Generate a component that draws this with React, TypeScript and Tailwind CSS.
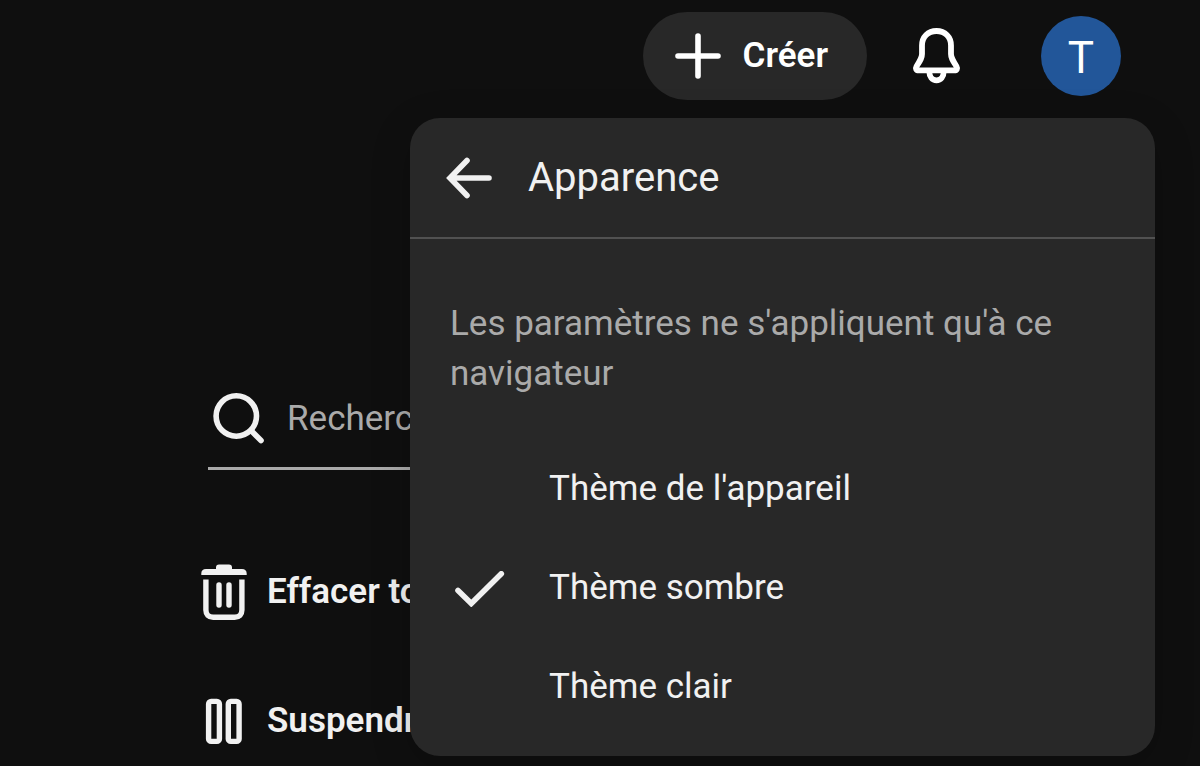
import { useState } from "react";

function PlusIcon() {
  return (
    <svg width="46" height="46" viewBox="0 0 46 46" fill="none" stroke="currentColor" strokeWidth="5.6" strokeLinecap="round" aria-hidden="true">
      <path d="M23 3v40M3 23h40" />
    </svg>
  );
}

function BellIcon() {
  return (
    <svg width="49" height="56" viewBox="0 0 49 56" fill="none" stroke="currentColor" strokeWidth="5.8" strokeLinejoin="round" aria-hidden="true">
      <path d="M24.5 3C16 3 10 9 10 17.5V26c0 3.600-1.200 5.600-5.400 12.200-1.300 2.400-.6 4.200 2.200 4.200h35.400c2.800 0 3.500-1.800 2.200-4.200C40.200 31.600 39 29.600 39 26v-8.500C39 9 33 3 24.500 3Z" />
      <path d="M17.300 43.500c0 5.300 3 8.800 7.200 8.800s7.200-3.500 7.200-8.800" />
    </svg>
  );
}

function ArrowLeftIcon() {
  return (
    <svg width="46" height="42" viewBox="0 0 46 42" fill="none" stroke="currentColor" strokeWidth="5.6" strokeLinecap="round" aria-hidden="true">
      <path d="M21 3.500 4 21l17 17.500M4 21h39" />
    </svg>
  );
}

function SearchIcon() {
  return (
    <svg className="shrink-0" width="52" height="52" viewBox="0 0 52 52" fill="none" stroke="currentColor" strokeWidth="5.600" strokeLinecap="round" aria-hidden="true">
      <circle cx="23.300" cy="24" r="20.200" />
      <path d="m38 38.500 10 10" />
    </svg>
  );
}

function TrashIcon() {
  return (
    <svg width="46" height="56" viewBox="0 0 46 56" fill="none" aria-hidden="true">
      <path d="M.3 11V9.500C.3 6.500 2 5 5 5h10V3.500C15 1.500 16 .5 18 .5h10c2 0 3 1 3 3V5h10c3 0 4.700 1.500 4.700 4.500V11Z" fill="currentColor" />
      <path d="M4.900 15.500V46c0 4.500 2.600 7.200 7.200 7.200h21.600c4.600 0 7.200-2.700 7.200-7.200V15.500" stroke="currentColor" strokeWidth="5.400" />
      <path d="M18 21v20M28 21v20" stroke="currentColor" strokeWidth="5.400" strokeLinecap="round" />
    </svg>
  );
}

function PauseIcon() {
  return (
    <svg width="46" height="56" viewBox="0 0 46 56" fill="none" stroke="currentColor" strokeWidth="5.400" aria-hidden="true">
      <rect x="7.600" y="8.400" width="10.800" height="40" rx="2.500" />
      <rect x="27.300" y="8.400" width="10.800" height="40" rx="2.500" />
    </svg>
  );
}

function CheckIcon() {
  return (
    <svg width="50" height="36" viewBox="0 0 50 36" fill="none" stroke="currentColor" strokeWidth="5.600" strokeLinecap="round" aria-hidden="true">
      <path d="M3 19.500 16.300 32.500 46.300 2.800" />
    </svg>
  );
}

const themes = [
  { id: "device", label: "Thème de l'appareil" },
  { id: "dark", label: "Thème sombre" },
  { id: "light", label: "Thème clair" },
];

function AppearanceMenu() {
  const [theme, setTheme] = useState("dark");

  return (
    <section className="absolute top-[118px] right-[45px] w-[745px] pb-5 rounded-[30px] bg-[#282828] shadow-[0_10px_40px_rgba(0,0,0,0.2)]">
      <header className="flex items-center gap-9 h-[121px] px-9 border-b-2 border-[#515151]">
        <button type="button" aria-label="Retour">
          <ArrowLeftIcon />
        </button>
        <h2 className="text-[40px] leading-[50px]">Apparence</h2>
      </header>
      <p className="px-10 pt-[60px] text-[35px] leading-[50px] text-[#aaaaaa]">
        Les paramètres ne s'appliquent qu'à ce navigateur
      </p>
      <div role="menu" className="mt-10">
        {themes.map((item) => (
          <button
            key={item.id}
            type="button"
            role="menuitemradio"
            aria-checked={theme === item.id}
            onClick={() => setTheme(item.id)}
            className="flex items-center gap-11 w-full h-[99px] px-[45px] text-left text-[35px] leading-[50px]"
          >
            <span className="w-[50px] pt-0.5">{theme === item.id && <CheckIcon />}</span>
            {item.label}
          </button>
        ))}
      </div>
    </section>
  );
}

export default function App() {
  return (
    <div className="relative min-h-screen bg-[#0f0f0f] text-[#f1f1f1] font-[Roboto,sans-serif]">
      <header className="flex items-center justify-end h-28 pr-[79px] text-white">
        <button type="button" className="flex items-center gap-[22px] h-[88px] pl-8 pr-[39px] rounded-full bg-[#282828] text-[35px] font-semibold">
          <PlusIcon />
          Créer
        </button>
        <button type="button" aria-label="Notifications" className="ml-[45px]">
          <BellIcon />
        </button>
        <button type="button" aria-label="Compte" className="ml-20 pt-1 size-20 rounded-full bg-[#225699] text-[44px]">
          T
        </button>
      </header>

      <main className="pt-64 pl-[201px]">
        <label className="flex items-center gap-[22px] ml-[7px] w-[480px] h-[102px] pl-[5px] border-b-3 border-[#aaaaaa]">
          <SearchIcon />
          <input
            type="text"
            aria-label="Rechercher"
            placeholder="Rechercher"
            className="flex-1 min-w-0 pt-1 bg-transparent text-[35px] outline-none placeholder:text-[#aaaaaa]"
          />
        </label>
        <div className="flex flex-col items-start gap-[45px] mt-20 text-[35px] font-semibold">
          <button type="button" className="flex items-center gap-5 h-[84px]">
            <TrashIcon />
            Effacer tout
          </button>
          <button type="button" className="flex items-center gap-5 h-[84px]">
            <PauseIcon />
            Suspendre
          </button>
        </div>
      </main>

      <AppearanceMenu />
    </div>
  );
}
